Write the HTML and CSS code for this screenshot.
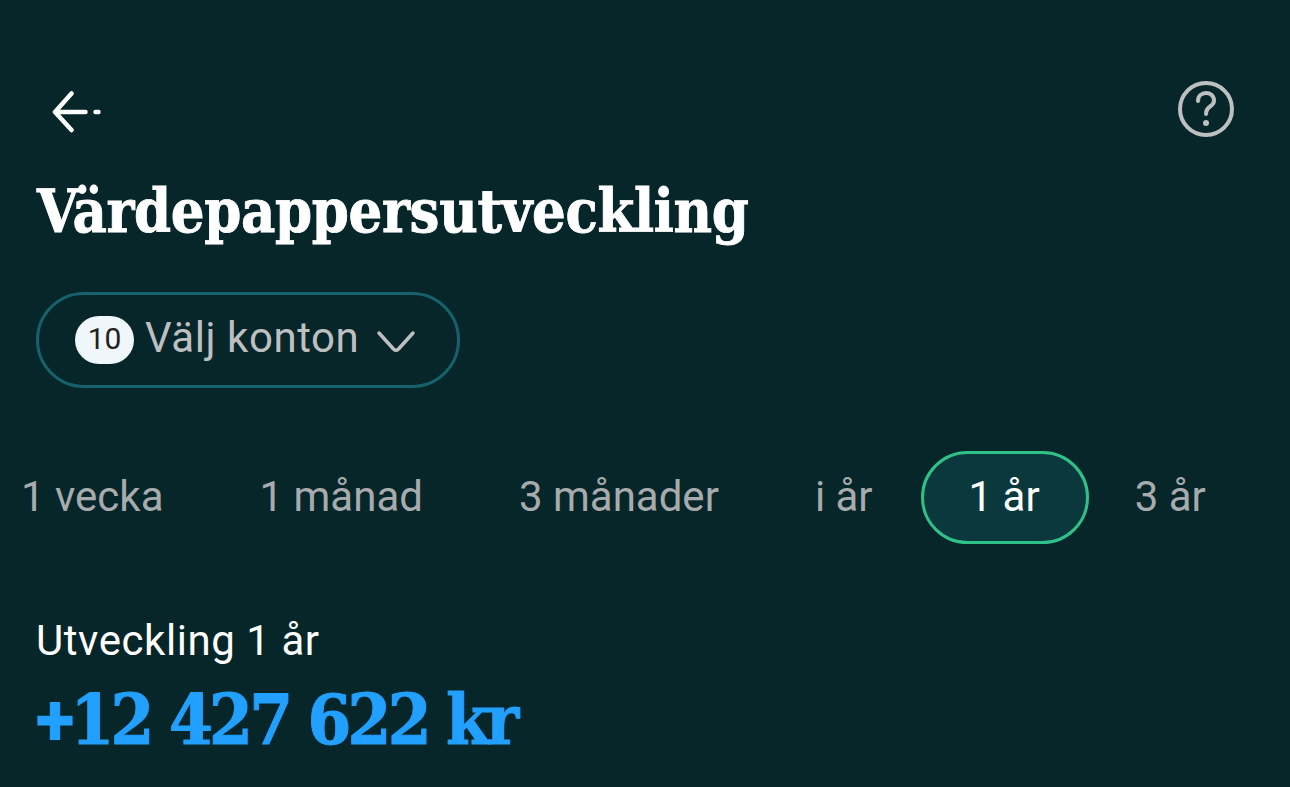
FILE: index.html
```
<!DOCTYPE html>
<html lang="sv">

<head>
    <meta charset="UTF-8">
    <meta name="viewport" content="width=device-width, initial-scale=1.0">
    <title>Värdepappersutveckling</title>
    <link rel="stylesheet" href="styles.css">
</head>

<body>
    <header class="topbar">
        <button class="btn-icon back" aria-label="Tillbaka">
            <svg width="50" height="42" viewBox="0 0 50 42" fill="none" stroke="#fff" stroke-width="4.500" stroke-linecap="round" stroke-linejoin="round">
                <path d="M19.500 2.500 L3 21 L19.500 39 M4 21 H33.500 M43.500 21 H46.500" />
            </svg>
        </button>
        <button class="btn-icon" aria-label="Hjälp">
            <svg width="58" height="58" viewBox="0 0 58 58" fill="none" stroke="#bebfc1" stroke-width="4" stroke-linecap="round">
                <circle cx="29" cy="29" r="26" />
                <path d="M21 21 C21 10.500 37 10.500 37 20.500 C37 27.500 29 25 29 34" />
                <circle cx="29" cy="43" r="3" fill="#bebfc1" stroke="none" />
            </svg>
        </button>
    </header>

    <h1 class="title">Värdepappersutveckling</h1>

    <button class="accounts">
        <span class="badge">10</span>
        <span class="accounts-label">Välj konton</span>
        <svg class="chevron" width="40" height="24" viewBox="0 0 40 24" fill="none" stroke="#bebfc1" stroke-width="3.500" stroke-linecap="round" stroke-linejoin="round">
            <path d="M3 3 L17.500 19 Q20 21.500 22.500 19 L37 3" />
        </svg>
    </button>

    <nav class="periods">
        <button class="period">1 vecka</button>
        <button class="period">1 månad</button>
        <button class="period">3 månader</button>
        <button class="period">i år</button>
        <button class="period active">1 år</button>
        <button class="period">3 år</button>
    </nav>

    <section class="result">
        <p class="result-label">Utveckling 1 år</p>
        <p class="result-value"><span class="sign">+</span>12 427 622 kr</p>
    </section>
</body>

</html>
```
FILE: styles.css
```
* {
    box-sizing: border-box;
}

body {
    margin: 0;
    height: 787px;
    overflow: hidden;
    background-color: #072629;
    color: #fff;
    font-family: Roboto, sans-serif;
}

button {
    border: none;
    padding: 0;
    background: none;
    color: inherit;
    font: inherit;
    cursor: pointer;
}

.topbar {
    display: flex;
    justify-content: space-between;
    align-items: center;
    padding: 80px 55px 0 52px;
}

.btn-icon svg {
    display: block;
}

.back {
    padding-top: 6px;
}

.title {
    margin: 34px 0 0 37px;
    font-family: "Roboto Slab", "DejaVu Serif Condensed", "DejaVu Serif", serif;
    font-size: 59px;
    line-height: 80px;
    font-weight: bold;
    letter-spacing: -0.35px;
    white-space: nowrap;
    -webkit-text-stroke: 0.8px #fff;
}

.accounts {
    display: flex;
    align-items: center;
    width: 424px;
    height: 96px;
    margin: 40px 0 0 36px;
    padding-left: 36px;
    border: 3px solid #17616c;
    border-radius: 48px;
    color: #bebfc1;
    font-size: 42px;
}

.badge {
    width: 59px;
    height: 48px;
    border-radius: 24px;
    background-color: #f0f7fa;
    color: #222;
    font-size: 30px;
    line-height: 46px;
}

.accounts-label {
    margin-left: 11px;
    padding-bottom: 5px;
    letter-spacing: 0.55px;
}

.chevron {
    margin: 3px 0 0 17px;
}

.periods {
    display: flex;
    margin: 63px 0 0 -27px;
    color: #a8abad;
    font-size: 42px;
}

.period {
    height: 93px;
    padding: 0 48px 3px;
    white-space: nowrap;
}

.active {
    padding: 0 46px 3px 45px;
    border: 3px solid #2fc188;
    border-radius: 47px;
    background-color: #0a383d;
    color: #fff;
}

.period:last-child {
    padding-left: 46px;
}

.result {
    margin: 70px 0 0 36px;
}

.result p {
    margin: 0;
}

.result-label {
    font-size: 42px;
    line-height: 54px;
    letter-spacing: 0.55px;
}

.result-value {
    color: #22a0ff;
    font-family: "Roboto Slab", "DejaVu Serif Condensed", "DejaVu Serif", serif;
    font-size: 70px;
    line-height: 104px;
    font-weight: bold;
    letter-spacing: -3.7px;
    white-space: nowrap;
    -webkit-text-stroke: 1px #22a0ff;
}

.sign {
    font-family: Roboto, sans-serif;
}
```
